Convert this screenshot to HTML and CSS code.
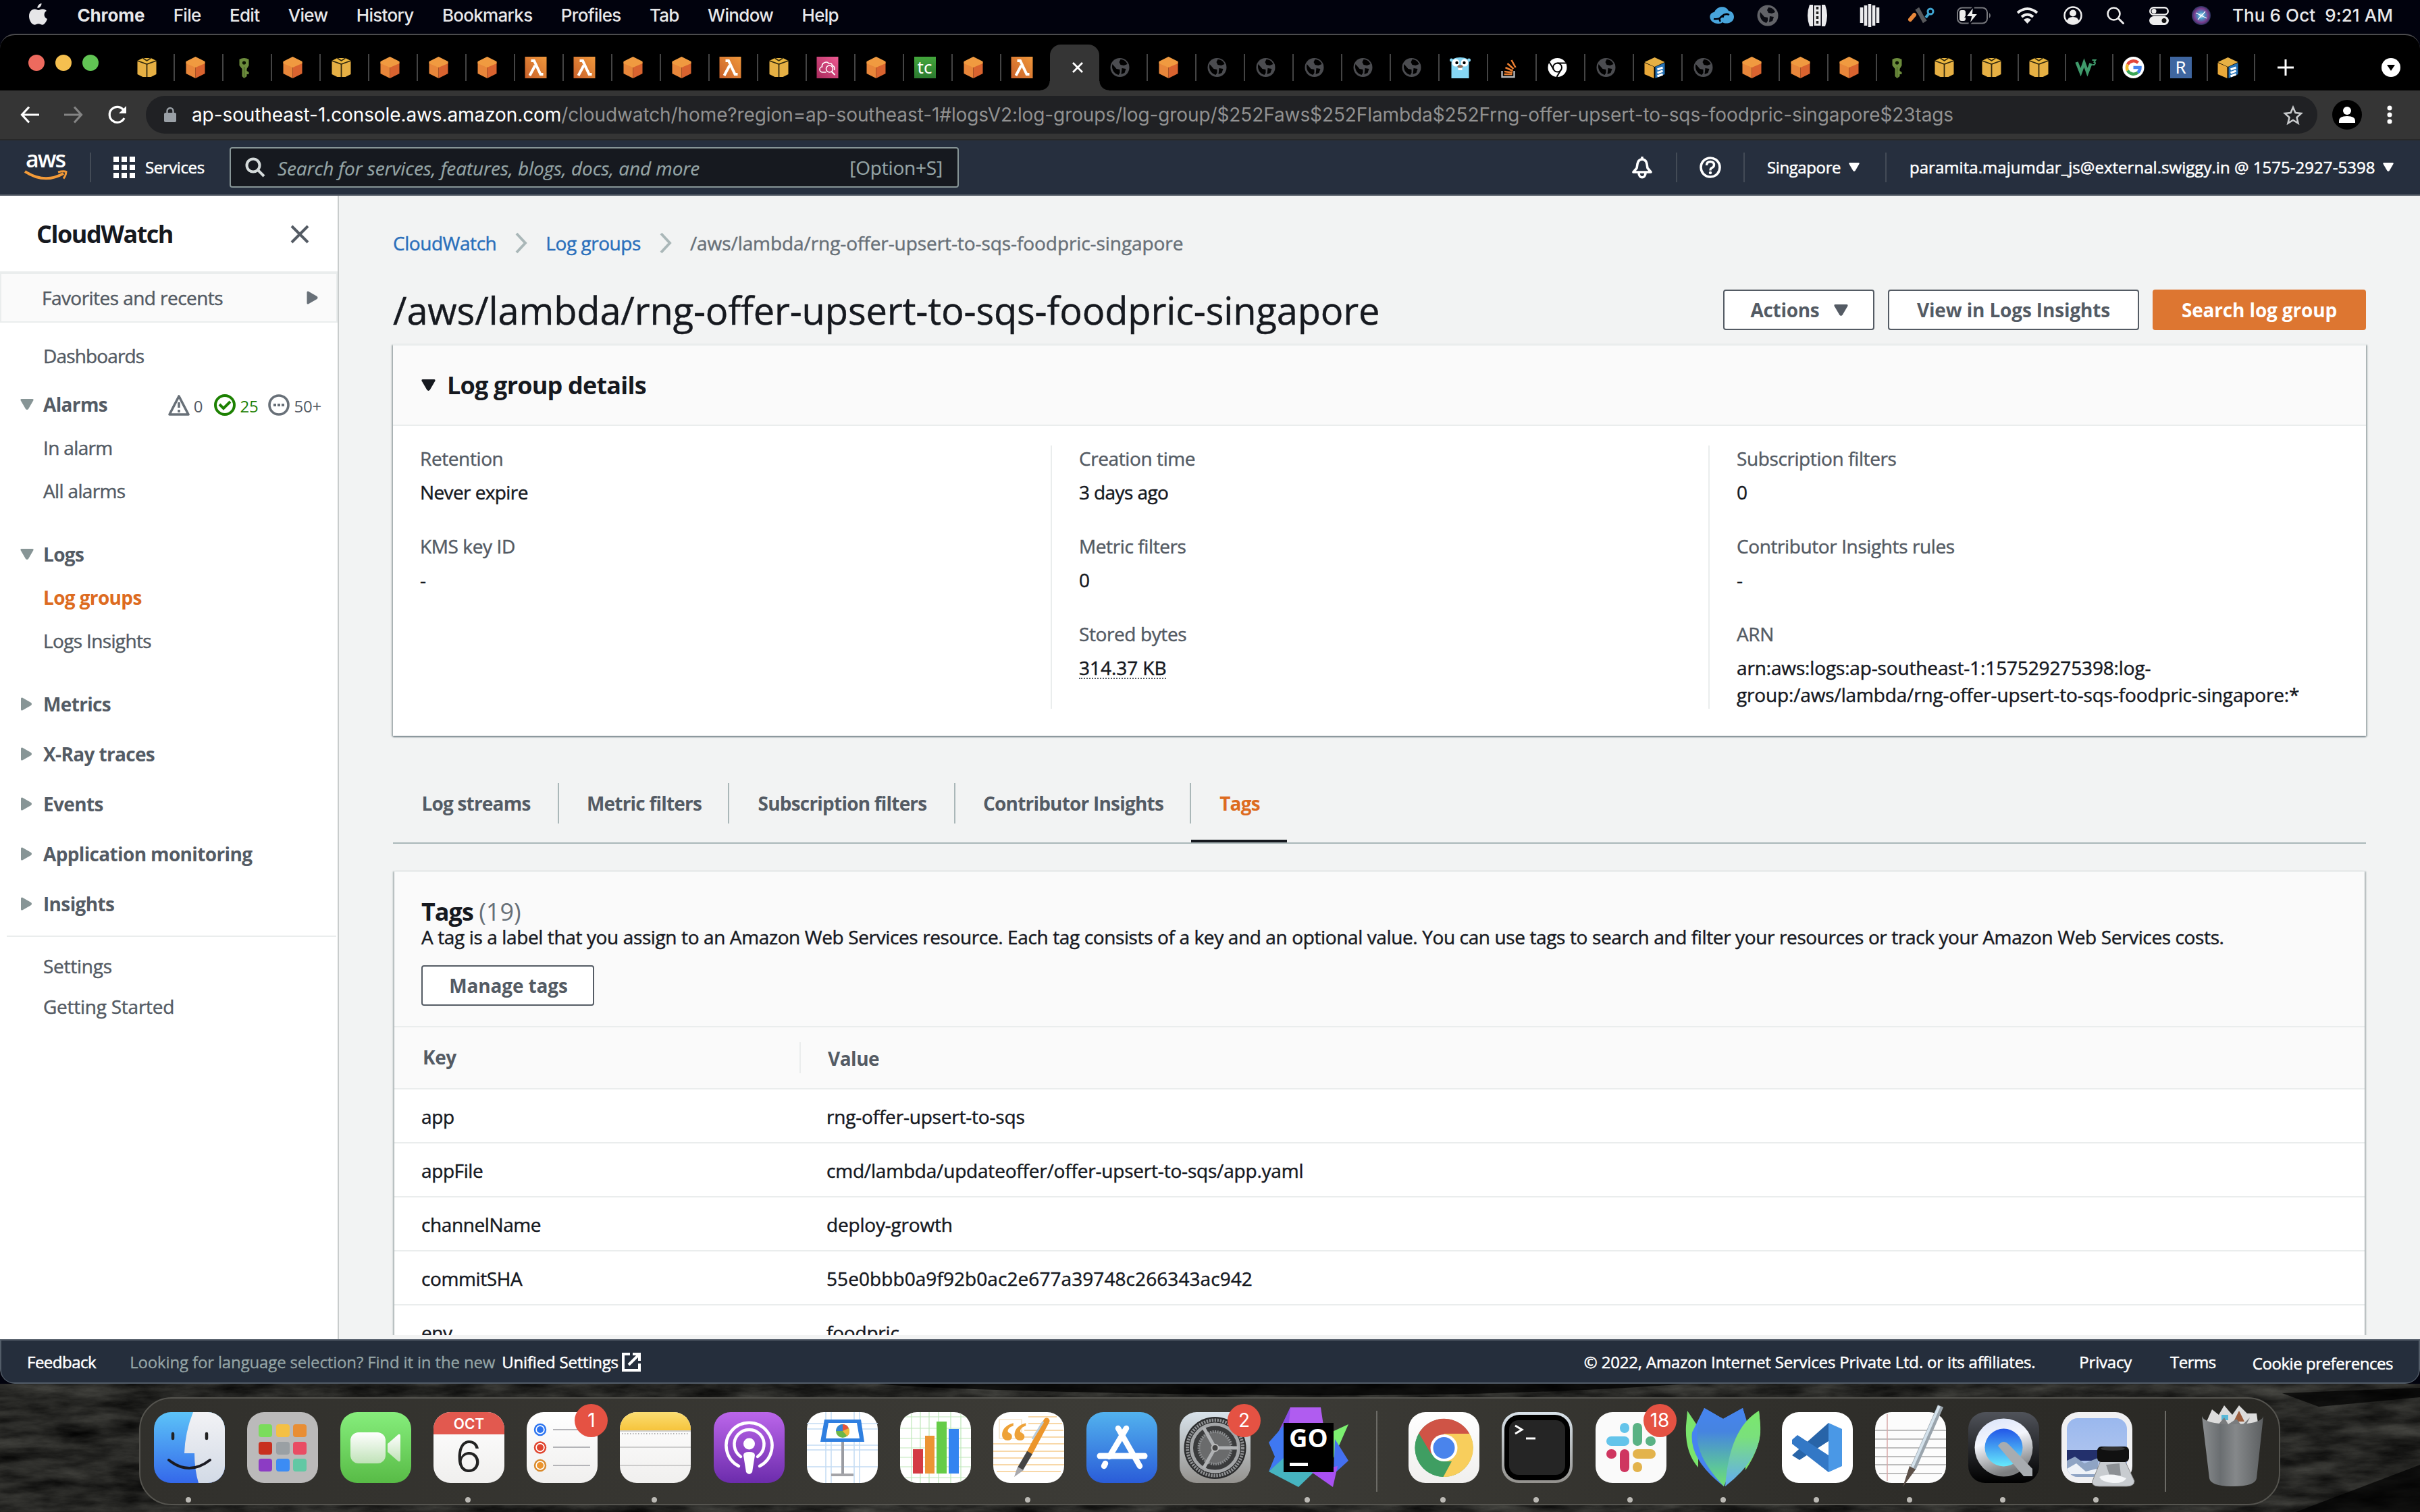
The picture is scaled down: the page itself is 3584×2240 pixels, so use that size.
FILE: index.html
```html
<!DOCTYPE html>
<html lang="en">
<head>
<meta charset="utf-8">
<title>CloudWatch Management Console</title>
<link rel="stylesheet" href="styles.css">
</head>
<body>
<svg class="defs" aria-hidden="true">
  <defs>
    <linearGradient id="gLambda" x1="0" y1="1" x2="1" y2="0"><stop offset="0" stop-color="#c8602a"/><stop offset="1" stop-color="#f0983c"/></linearGradient>
    <linearGradient id="gPink" x1="0" y1="1" x2="1" y2="0"><stop offset="0" stop-color="#a82a5c"/><stop offset="1" stop-color="#ee5a92"/></linearGradient>
    <linearGradient id="gBlue" x1="0" y1="0" x2="0" y2="1"><stop offset="0" stop-color="#5cc3f8"/><stop offset="1" stop-color="#3468ea"/></linearGradient>
    <linearGradient id="gStore" x1="0" y1="0" x2="0" y2="1"><stop offset="0" stop-color="#52b2ee"/><stop offset="1" stop-color="#2a5cd8"/></linearGradient>
    <linearGradient id="gFace" x1="0" y1="0" x2="0" y2="1"><stop offset="0" stop-color="#f2f2f5"/><stop offset="1" stop-color="#d2dae6"/></linearGradient>
    <linearGradient id="gGreen" x1="0" y1="0" x2="0" y2="1"><stop offset="0" stop-color="#86ee7c"/><stop offset="1" stop-color="#58bb46"/></linearGradient>
    <linearGradient id="gCam" x1="0" y1="0" x2="0" y2="1"><stop offset="0" stop-color="#fff"/><stop offset="1" stop-color="#c0e2b8"/></linearGradient>
    <linearGradient id="gPaper" x1="0" y1="0" x2="0" y2="1"><stop offset="0" stop-color="#fff"/><stop offset="1" stop-color="#f0efee"/></linearGradient>
    <linearGradient id="gNote" x1="0" y1="0" x2="0" y2="1"><stop offset="0" stop-color="#fbdd72"/><stop offset="1" stop-color="#f6c43c"/></linearGradient>
    <linearGradient id="gPod" x1="0" y1="0" x2="0" y2="1"><stop offset="0" stop-color="#bb66ea"/><stop offset="1" stop-color="#6c2cac"/></linearGradient>
    <linearGradient id="gGray" x1="0" y1="0" x2="0" y2="1"><stop offset="0" stop-color="#d8e2ea"/><stop offset="1" stop-color="#94928e"/></linearGradient>
    <linearGradient id="gLeaf" x1="0" y1="0" x2="0" y2="1"><stop offset="0" stop-color="#4684f0"/><stop offset=".3" stop-color="#4684e0"/><stop offset=".75" stop-color="#5cc49c"/><stop offset="1" stop-color="#72e070"/></linearGradient>
    <linearGradient id="gLeaf2" x1="0" y1="0" x2="0" y2="1"><stop offset="0" stop-color="#7ae86c"/><stop offset=".35" stop-color="#7ae07c"/><stop offset="1" stop-color="#62aaf4"/></linearGradient>
    <linearGradient id="gDark" x1="0" y1="0" x2="0" y2="1"><stop offset="0" stop-color="#50535a"/><stop offset="1" stop-color="#000"/></linearGradient>
    <linearGradient id="gSteel" x1="0" y1="0" x2=".3" y2="1"><stop offset="0" stop-color="#d8e2fa"/><stop offset=".45" stop-color="#f4f6fc"/><stop offset="1" stop-color="#7c7e80"/></linearGradient>
    <linearGradient id="gQt" x1="0" y1="0" x2="0" y2="1"><stop offset="0" stop-color="#2256e8"/><stop offset="1" stop-color="#66eafc"/></linearGradient>
    <linearGradient id="gTrash" x1="0" y1="0" x2="1" y2="0"><stop offset="0" stop-color="#8a8d8f"/><stop offset=".3" stop-color="#6a6e71"/><stop offset=".55" stop-color="#85888a"/><stop offset="1" stop-color="#5c5f61"/></linearGradient>
    <linearGradient id="gSky" x1="0" y1="0" x2="0" y2="1"><stop offset="0" stop-color="#9ab8ee"/><stop offset="1" stop-color="#b8caee"/></linearGradient>
    <radialGradient id="gSiri"><stop offset="0" stop-color="#d8f0ff"/><stop offset=".35" stop-color="#4a98c8"/><stop offset=".75" stop-color="#7a3a8c"/><stop offset="1" stop-color="#2a3560"/></radialGradient>
    <clipPath id="tile"><rect width="105" height="105" rx="25"/></clipPath>
    <clipPath id="shot"><rect x="8" y="9" width="89" height="87" rx="16"/></clipPath>
    <filter id="rock" x="0" y="0" width="100%" height="100%" color-interpolation-filters="sRGB">
      <feTurbulence type="fractalNoise" baseFrequency=".012 .05" numOctaves="6" seed="8"/>
      <feColorMatrix values=".32 0 0 0 -.01  .32 0 0 0 -.01  .3 0 0 0 -.01  0 0 0 0 1"/>
    </filter>
  </defs>
  <symbol id="cube" viewBox="0 0 32 32"><path fill="#e8863a" d="M2 8 16 14v18L2 25z"/><path fill="#d9632f" d="M30 8 16 14v18l14-7z"/><path fill="#f09a40" d="M16 0 30 7v3l-14 6L2 10V7z"/></symbol>
  <symbol id="box" viewBox="0 0 32 32"><path fill="#e6b044" d="M2 7h28v19l-8 4H10l-8-4z"/><path fill="#edb83f" d="M10 2h12l8 4-14 5L2 6z"/><path fill="none" stroke="#32290f" stroke-width="1.800" d="m2 6 14 5 14-5M10 2l6 4 6-4M16 11v19"/></symbol>
  <symbol id="key" viewBox="0 0 32 32"><path fill="#6c8c3c" d="M9 4q7-4 14 0v9l-3 5v3l3 2v3h-3v3l-4 3-3-3V18l-4-5z"/><circle cx="16" cy="9" r="2.600" fill="#0c1400"/><path stroke="#3e5620" d="M16 15v16"/></symbol>
  <symbol id="lambda" viewBox="0 0 32 32"><path fill="url(#gLambda)" d="M0 0h32v32H0z"/><path fill="none" stroke="#fff" stroke-width="4" d="M9 6h4.500L23 26h4M15 13 7 28"/></symbol>
  <symbol id="insight" viewBox="0 0 32 32"><path fill="url(#gPink)" d="M0 0h32v32H0z"/><path fill="none" stroke="#fff" stroke-width="1.600" d="M14 23H9a4 4 0 0 1-1-8c-1-6 7-9 10-5 3-1 5 1 5 3 4 1 4 5 3 7"/><circle cx="19" cy="18" r="5" fill="none" stroke="#fff" stroke-width="1.600"/><path stroke="#fff" stroke-width="2" d="m22 22 5 5"/></symbol>
  <symbol id="globe" viewBox="0 0 32 32"><circle cx="16" cy="16" r="14" fill="#4b4c50"/><path d="M17 4c6 0 9 4 10 7l-5 2-5-1-2-4zM5 11l6 7 5 1v5l-2 3C7 25 3 18 5 11zM19 17l6 1-2 6-5 2z"/></symbol>
  <symbol id="s3" viewBox="0 0 32 32"><path fill="#e6b044" d="M1 8 16 1l15 7-15 7z"/><path fill="#e9a93a" d="m1 9 14 6v17L1 26z"/><path fill="#2673b8" d="m17 15 14-6v17l-14 6z"/><path stroke="#fff" stroke-width="3" d="m20 19 8-3m-8 8 8-3m-8 8 8-3"/></symbol>
  <symbol id="alarmTri" viewBox="0 0 32 32"><path fill="none" stroke="#687078" stroke-width="3.600" stroke-linejoin="round" d="M16 3 30 30H2z"/><path stroke="#687078" stroke-width="3.600" d="M16 12v8m0 3v4"/></symbol>
  <symbol id="ok" viewBox="0 0 32 32"><circle cx="16" cy="16" r="14" fill="none" stroke="#1d8102" stroke-width="4"/><path fill="none" stroke="#1d8102" stroke-width="4" d="m8 15 6 6 10-10"/></symbol>
  <symbol id="pending" viewBox="0 0 32 32"><circle cx="16" cy="16" r="14" fill="none" stroke="#687078" stroke-width="3.600"/><path stroke="#687078" stroke-width="4" stroke-dasharray="4 2" d="M8 16h17"/></symbol>
  <symbol id="down" viewBox="0 0 20 16"><path fill="currentColor" d="M2 0h16q2 0 1.500 2L12 15q-2 2-4 0L.500 2Q0 0 2 0z"/></symbol>
  <symbol id="right" viewBox="0 0 16 20"><path fill="currentColor" d="M0 2Q0 0 2 .500L15 8q2 2 0 4L2 19.500Q0 20 0 18z"/></symbol>
  <symbol id="chev" viewBox="0 0 18 32"><path fill="none" stroke="#aab7b8" stroke-width="4" d="m2 2 13 14L2 30"/></symbol>
</svg>

<header class="menubar">
  <nav class="menus">
    <svg class="apple" viewBox="0 0 27 32"><path fill="#e6e6e8" d="M18.500 0c.3 3.500-2.700 7-6 7C12 3.600 15.200.5 18.500 0zM26 11c-5 3-4.300 10 1 12-1 3.500-4 8.500-7 8.700-2.500 0-3.300-1.400-6-1.400s-3.700 1.400-6 1.400C4 31.500 0 25 0 19 0 12 4.300 8.500 8.300 8.500c2.400 0 4.200 1.600 5.700 1.600s3.500-1.700 6.500-1.600c2.200.1 4.200 1 5.500 2.500z"/></svg>
    <b>Chrome</b><span>File</span><span>Edit</span><span>View</span><span>History</span><span>Bookmarks</span><span>Profiles</span><span>Tab</span><span>Window</span><span>Help</span>
  </nav>
  <div class="status">
    <svg width="37" height="26" viewBox="0 0 37 26"><path fill="#48a5dc" d="M12 25C-2 24-3 9 7 8 10-1 24-3 28 6c9 1 11 13 3 17-4 2-9 2-12 0-2 2-5 2-7 2z"/><path fill="none" stroke="#01020d" stroke-width="2.500" d="M6 18c5 1 9 0 12-4 3-3 7-4 11-2M16 22c-3-4 0-9 5-7"/></svg>
    <svg width="32" height="32" viewBox="0 0 32 32"><circle cx="16" cy="16" r="15.500" fill="#626368"/><path fill="#0a0b12" d="M17 4c6 0 9 4 10 7l-5 2-5-1-2-4zM5 11l6 7 5 1v5l-2 3C7 25 3 18 5 11zM19 17l6 1-2 6-5 2z"/></svg>
    <svg width="31" height="32" viewBox="0 0 31 32"><path fill="#ececee" d="M4 0h5v32H4q-6-16 0-32zM22 0h5q6 16 0 32h-5zM10.500 1h10v30h-10z"/><path stroke="#222" stroke-width="3.500" stroke-dasharray="4 3" d="M15.500 3v27"/></svg>
    <svg width="28" height="34" viewBox="0 0 28 34"><path stroke="#ececee" stroke-width="4.600" d="M2 5v23M8 2v30M14 0v34M20 2v30M26 5v23"/></svg>
    <svg width="40" height="22" viewBox="0 0 40 22"><path fill="none" stroke="#58595c" stroke-width="6" d="m13 5 3-2 8 15 3-2"/><path stroke="#e8873a" stroke-width="6" stroke-linecap="round" d="m4 17 6-7"/><circle cx="34" cy="5" r="4" fill="none" stroke="#3fa4d0" stroke-width="3"/><path stroke="#3fa4d0" stroke-width="4" d="m27 14 4-5"/></svg>
    <svg width="52" height="26" viewBox="0 0 52 26"><rect x="1" y="1.500" width="44" height="23" rx="7" fill="none" stroke="#77787d" stroke-width="2"/><rect x="4" y="5" width="9" height="16" rx="3" fill="#eee"/><path fill="#eee" stroke="#01020d" stroke-width="2" d="M25-1 13 15h8l-3 12 14-17h-8z"/><path fill="#77787d" d="M48 9q4 4 0 8z"/></svg>
    <svg width="33" height="24" viewBox="0 0 33 24"><path fill="none" stroke="#eee" stroke-width="4" d="M2 8q14.500-12 29 0M8 14q8.500-7 17 0"/><path fill="#eee" d="M11 18q5.500-4 11 0l-5.500 6z"/></svg>
    <svg width="28" height="28" viewBox="0 0 28 28"><circle cx="14" cy="14" r="12.500" fill="none" stroke="#eee" stroke-width="2.500"/><circle cx="14" cy="10.500" r="5" fill="#eee"/><path fill="#eee" d="M5 22q2-6 9-6t9 6q-9 8-18 0z"/></svg>
    <svg width="26" height="26" viewBox="0 0 26 26"><circle cx="10.500" cy="10.500" r="9" fill="none" stroke="#eee" stroke-width="2.600"/><path stroke="#eee" stroke-width="3" stroke-linecap="round" d="m17 17 7.500 7.500"/></svg>
    <svg width="29" height="27" viewBox="0 0 29 27"><rect x="1.200" y="1.200" width="26.600" height="10.600" rx="5.300" fill="none" stroke="#eee" stroke-width="2.400"/><circle cx="7" cy="6.500" r="3.500" fill="#eee"/><rect y="14" width="29" height="13" rx="6.500" fill="#eee"/><circle cx="22" cy="20.500" r="3.500" fill="#111"/></svg>
    <svg width="28" height="28" viewBox="0 0 28 28"><circle cx="14" cy="14" r="14" fill="url(#gSiri)"/><path stroke="#fff" stroke-width="1.200" d="m6 10 16 8M20 8 9 20"/></svg>
    <span class="clock">Thu 6 Oct&nbsp; 9:21 AM</span>
  </div>
</header>

<div class="window">
  <div class="tabstrip">
    <div class="lights"><i class="red"></i><i class="amber"></i><i class="green"></i></div>
    <div class="tabs">
      <svg><use href="#box"/></svg><svg><use href="#cube"/></svg><svg><use href="#key"/></svg><svg><use href="#cube"/></svg><svg><use href="#box"/></svg><svg><use href="#cube"/></svg><svg><use href="#cube"/></svg><svg><use href="#cube"/></svg><svg><use href="#lambda"/></svg><svg><use href="#lambda"/></svg><svg><use href="#cube"/></svg><svg><use href="#cube"/></svg><svg><use href="#lambda"/></svg><svg><use href="#box"/></svg><svg><use href="#insight"/></svg><svg><use href="#cube"/></svg><b class="tc">tc</b><svg><use href="#cube"/></svg><svg class="last"><use href="#lambda"/></svg>
    </div>
    <div class="active-tab"><svg width="18" height="18" viewBox="0 0 18 18"><path stroke="#fff" stroke-width="2.800" d="m2 2 14 14M16 2 2 16"/></svg></div>
    <div class="tabs">
      <svg><use href="#globe"/></svg><svg><use href="#cube"/></svg><svg><use href="#globe"/></svg><svg><use href="#globe"/></svg><svg><use href="#globe"/></svg><svg><use href="#globe"/></svg><svg><use href="#globe"/></svg>
      <svg viewBox="0 0 32 32"><path fill="#86d7f5" d="M3 9Q3 1 16 1t13 8v23H3z"/><circle cx="3" cy="5" r="2.500" fill="#86d7f5"/><circle cx="29" cy="5" r="2.500" fill="#86d7f5"/><circle cx="9.500" cy="9" r="5.500" fill="#fff"/><circle cx="22.500" cy="9" r="5.500" fill="#fff"/><circle cx="11" cy="9" r="2.200"/><circle cx="22" cy="9" r="2.200"/><path fill="#fff" d="M13 14h6v6h-6z"/><ellipse cx="16" cy="14.500" rx="4" ry="2.200" fill="#8a6a58"/></svg>
      <svg viewBox="0 0 32 32"><path fill="none" stroke="#b8babd" stroke-width="2.400" d="M6 21v9h18v-9"/><path stroke="#e87d30" stroke-width="2.600" d="M9 26h12M9.500 22l12 1.500M11 16l11 5M14 10l9 8M20 5l6 11"/></svg>
      <svg viewBox="0 0 32 32"><circle cx="16" cy="16" r="14" fill="#fff"/><circle cx="16" cy="16" r="6.500" fill="none" stroke="#000" stroke-width="2"/><path stroke="#000" stroke-width="2" d="M16 9.500h13M10.500 19 4 8M21.500 19 15 30"/></svg>
      <svg><use href="#globe"/></svg><svg><use href="#s3"/></svg><svg><use href="#globe"/></svg><svg><use href="#cube"/></svg><svg><use href="#cube"/></svg><svg><use href="#cube"/></svg>
    </div>
    <div class="tabs narrow">
      <svg><use href="#key"/></svg><svg><use href="#box"/></svg><svg><use href="#box"/></svg><svg><use href="#box"/></svg>
      <svg viewBox="0 0 32 32"><path fill="none" stroke="#3f9a6b" stroke-width="4.500" d="m2 8 6 15 5-14 5 14 5-13"/><path fill="none" stroke="#3f9a6b" stroke-width="2" d="M25 5h5l-2 3q3 1 0 4h-3"/></svg>
      <svg viewBox="0 0 32 32"><circle cx="16" cy="16" r="16" fill="#fff"/><g fill="none" stroke-width="4.500"><path stroke="#e2463a" d="M7.500 11.500a10 10 0 0 1 15.500-2.500"/><path stroke="#f2b92c" d="M7.500 20.500a10 10 0 0 1 0-9"/><path stroke="#3ba556" d="M22.500 23.500A10 10 0 0 1 7.500 20.500"/><path stroke="#4484ee" d="M16 16h10q0 5-3.500 7.500"/></g></svg>
      <b class="r">R</b><svg><use href="#s3"/></svg>
    </div>
    <svg class="plus" width="24" height="24" viewBox="0 0 24 24"><path stroke="#fff" stroke-width="3" d="M12 0v24M0 12h24"/></svg>
    <svg class="more-tabs" width="28" height="28" viewBox="0 0 28 28"><circle cx="14" cy="14" r="14" fill="#fff"/><path d="M8 10h12l-6 9z"/></svg>
  </div>

  <div class="toolbar">
    <svg width="28" height="26" viewBox="0 0 28 26"><path fill="none" stroke="#fff" stroke-width="3.200" d="M28 13H3M13 1.500 2.500 13 13 24.500"/></svg>
    <svg width="28" height="26" viewBox="0 0 28 26"><path fill="none" stroke="#848484" stroke-width="3.200" d="M0 13h25M15 1.500 25.500 13 15 24.500"/></svg>
    <svg width="28" height="28" viewBox="0 0 28 28"><path fill="none" stroke="#fff" stroke-width="3.200" d="M24 19A11.500 11.500 0 1 1 23 7"/><path fill="#fff" d="M27 1v11H16z"/></svg>
    <div class="omnibox">
      <svg width="18" height="22" viewBox="0 0 18 22"><rect y="8" width="18" height="14" rx="2" fill="#9aa0a6"/><path fill="none" stroke="#9aa0a6" stroke-width="2.400" d="M4.500 9V5.500a4.500 4.500 0 0 1 9 0V9"/></svg>
      <span class="url"><em>ap-southeast-1.console.aws.amazon.com</em>/cloudwatch/home?region=ap-southeast-1#logsV2:log-groups/log-group/$252Faws$252Flambda$252Frng-offer-upsert-to-sqs-foodpric-singapore$23tags</span>
      <svg class="star" width="30" height="28" viewBox="0 0 30 28"><path fill="none" stroke="#c8cacc" stroke-width="2.600" d="m15 3 3.500 8 8.500 1-6.500 6 2 8.500L15 22l-7.500 4.500 2-8.500L3 12l8.500-1z"/></svg>
    </div>
    <svg class="avatar" width="44" height="44" viewBox="0 0 44 44"><circle cx="22" cy="22" r="22"/><circle cx="22" cy="16" r="6" fill="#fff"/><path fill="#fff" d="M10 34v-3q0-7 12-7t12 7v3z"/></svg>
    <svg width="8" height="28" viewBox="0 0 8 28"><g fill="#fff"><circle cx="4" cy="4" r="3.500"/><circle cx="4" cy="14" r="3.500"/><circle cx="4" cy="24" r="3.500"/></g></svg>
  </div>

  <div class="awsbar">
    <svg class="aws-logo" width="64" height="44" viewBox="0 0 64 44"><text x="2" y="21" textLength="59" class="aws-word">aws</text><path fill="none" stroke="#f29a38" stroke-width="4" d="M1 27q29 19 57 3"/><path fill="none" stroke="#f29a38" stroke-width="3" d="M50 28q8-2 12-.500-.500 6-4 10"/></svg>
    <a class="services"><svg width="32" height="32" viewBox="0 0 32 32"><path stroke="#fff" stroke-width="8" stroke-dasharray="8 4" d="M0 4h32M0 16h32M0 28h32"/></svg>Services</a>
    <div class="search">
      <svg width="30" height="30" viewBox="0 0 30 30"><circle cx="12" cy="12" r="9.500" fill="none" stroke="#d5dbdb" stroke-width="4"/><path stroke="#d5dbdb" stroke-width="4" d="m19 19 9 9"/></svg>
      <i>Search for services, features, blogs, docs, and more</i><span>[Option+S]</span>
    </div>
    <div class="account">
      <a class="c-bell"><svg width="32" height="34" viewBox="0 0 32 34"><path fill="none" stroke="#fff" stroke-width="3.600" stroke-linejoin="round" d="M16 1v4M16 5c-8 0-7 10-8 13l-5 6h26l-5-6c-1-3 0-13-8-13zM11 25c0 9 10 9 10 0"/></svg></a>
      <a class="c-help"><svg width="32" height="32" viewBox="0 0 32 32"><circle cx="16" cy="16" r="14" fill="none" stroke="#fff" stroke-width="3.600"/><path fill="none" stroke="#fff" stroke-width="3.400" d="M10.500 13q0-5.500 5.500-5.500t5.500 5q0 3-4 4.500-1.500.8-1.500 3.500"/><circle cx="16" cy="24" r="2.200" fill="#fff"/></svg></a>
      <a class="c-region">Singapore<svg><use href="#down"/></svg></a>
      <a class="c-user">paramita.majumdar_js@external.swiggy.in @ 1575-2927-5398<svg><use href="#down"/></svg></a>
    </div>
  </div>

  <div class="page">
    <aside class="sidebar">
      <div class="side-title"><h2>CloudWatch</h2><svg width="28" height="28" viewBox="0 0 28 28"><path stroke="#545b64" stroke-width="4" d="m2 2 24 24M26 2 2 26"/></svg></div>
      <div class="favorites">Favorites and recents<svg><use href="#right"/></svg></div>
      <nav>
        <a class="dash">Dashboards</a>
        <a class="group"><svg class="dn"><use href="#down"/></svg>Alarms
          <span class="counts"><svg><use href="#alarmTri"/></svg><span class="n0">0</span><svg><use href="#ok"/></svg><span class="n1">25</span><svg><use href="#pending"/></svg><span>50+</span></span></a>
        <a>In alarm</a><a>All alarms</a>
        <a class="group far"><svg class="dn"><use href="#down"/></svg>Logs</a>
        <a class="current">Log groups</a><a>Logs Insights</a>
        <a class="group far"><svg><use href="#right"/></svg>Metrics</a>
        <a class="group near"><svg><use href="#right"/></svg>X-Ray traces</a>
        <a class="group near"><svg><use href="#right"/></svg>Events</a>
        <a class="group near"><svg><use href="#right"/></svg>Application monitoring</a>
        <a class="group near"><svg><use href="#right"/></svg>Insights</a>
      </nav>
      <div class="side-foot"><a>Settings</a><a>Getting Started</a></div>
    </aside>

    <main>
      <div class="crumbs"><a>CloudWatch</a><svg><use href="#chev"/></svg><a>Log groups</a><svg><use href="#chev"/></svg><span>/aws/lambda/rng-offer-upsert-to-sqs-foodpric-singapore</span></div>
      <div class="headline">
        <h1>/aws/lambda/rng-offer-upsert-to-sqs-foodpric-singapore</h1>
        <button class="b-actions">Actions<svg><use href="#down"/></svg></button><button class="b-view">View in Logs Insights</button><button class="primary">Search log group</button>
      </div>
      <section class="card">
        <h2><svg><use href="#down"/></svg>Log group details</h2>
        <div class="columns">
          <dl><dt>Retention</dt><dd>Never expire</dd><dt>KMS key ID</dt><dd>-</dd></dl>
          <dl><dt>Creation time</dt><dd>3 days ago</dd><dt>Metric filters</dt><dd>0</dd><dt>Stored bytes</dt><dd><span class="dotted">314.37 KB</span></dd></dl>
          <dl><dt>Subscription filters</dt><dd>0</dd><dt>Contributor Insights rules</dt><dd>-</dd><dt>ARN</dt><dd class="arn">arn:aws:logs:ap-southeast-1:157529275398:log-<br>group:/aws/lambda/rng-offer-upsert-to-sqs-foodpric-singapore:*</dd></dl>
        </div>
      </section>
      <div class="tabbar"><a>Log streams</a><a>Metric filters</a><a>Subscription filters</a><a>Contributor Insights</a><a class="on">Tags</a></div>
      <section class="card tags">
        <div class="tags-head">
          <h2>Tags <span>(19)</span></h2>
          <p>A tag is a label that you assign to an Amazon Web Services resource. Each tag consists of a key and an optional value. You can use tags to search and filter your resources or track your Amazon Web Services costs.</p>
          <button>Manage tags</button>
        </div>
        <div class="row head"><span>Key</span><span>Value</span></div>
        <div class="row"><span>app</span><span>rng-offer-upsert-to-sqs</span></div>
        <div class="row"><span>appFile</span><span>cmd/lambda/updateoffer/offer-upsert-to-sqs/app.yaml</span></div>
        <div class="row"><span>channelName</span><span>deploy-growth</span></div>
        <div class="row"><span>commitSHA</span><span class="sha">55e0bbb0a9f92b0ac2e677a39748c266343ac942</span></div>
        <div class="row"><span>env</span><span>foodpric</span></div>
      </section>
    </main>
  </div>

  <footer>
    <a class="fb">Feedback</a><span class="lang">Looking for language selection? Find it in the new</span><a>Unified Settings</a>
    <svg width="28" height="28" viewBox="0 0 28 28"><path fill="none" stroke="#fff" stroke-width="4" d="M12 2H2v24h24V16M16 2h10v10M26 2 10 18"/></svg>
    <span class="copy">© 2022, Amazon Internet Services Private Ltd. or its affiliates.</span><a class="priv">Privacy</a><a class="terms">Terms</a><a class="cookie">Cookie preferences</a>
  </footer>
</div>

<div class="desktop">
  <svg class="wallpaper" width="3584" height="190"><rect width="3584" height="190" filter="url(#rock)"/><path d="M1300 0h1200q-300 22-700 16T1300 0zM3380 14 3584 6v14l-150 14zM3400 190l184-70v70z" opacity=".7"/></svg>
  <div class="dock">
    <div class="app run"><svg viewBox="0 0 105 105"><g clip-path="url(#tile)"><path fill="url(#gBlue)" d="M0 0h105v105H0z"/><path fill="url(#gFace)" d="M58 0Q46 30 45 61h15q0 24 6 44h39V0z"/></g><path stroke="#222" stroke-width="4.500" stroke-linecap="round" d="M28 32v7M78 32v7"/><path fill="none" stroke="#1a1a22" stroke-width="4" stroke-linecap="round" d="M22 71q30 24 61 0"/></svg></div>
    <div class="app"><svg viewBox="0 0 105 105"><rect width="105" height="105" rx="25" fill="#bbbaba"/><g><rect x="17" y="18" width="20" height="19" rx="4" fill="#7bdc5c"/><rect x="43" y="18" width="20" height="19" rx="4" fill="#f4c044"/><rect x="68" y="18" width="20" height="19" rx="4" fill="#e98e34"/><rect x="17" y="44" width="20" height="19" rx="4" fill="#c8301f"/><rect x="43" y="44" width="20" height="19" rx="4" fill="#9aa0a4"/><rect x="68" y="44" width="20" height="19" rx="4" fill="#e94c64"/><rect x="17" y="69" width="20" height="19" rx="4" fill="#8c3cc4"/><rect x="43" y="69" width="20" height="19" rx="4" fill="#3c8cf4"/><rect x="68" y="69" width="20" height="19" rx="4" fill="#62c8a4"/></g></svg></div>
    <div class="app"><svg viewBox="0 0 105 105"><rect width="105" height="105" rx="25" fill="url(#gGreen)"/><rect x="15" y="30" width="52" height="46" rx="12" fill="url(#gCam)"/><path fill="url(#gCam)" d="M70 47 86 33q3-1 3 2v36q0 3-3 2L70 59z"/></svg></div>
    <div class="app run"><svg viewBox="0 0 105 105"><g clip-path="url(#tile)"><path fill="url(#gPaper)" d="M0 0h105v105H0z"/><path fill="#e2594f" d="M0 0h105v33H0z"/></g><text x="52.500" y="25" class="oct">OCT</text><text x="52" y="89" class="six">6</text></svg></div>
    <div class="app"><svg viewBox="0 0 105 105"><rect width="105" height="105" rx="25" fill="url(#gPaper)"/><path stroke="#b4b4b8" stroke-width="2" d="M39 26h55M39 52h55M39 79h55"/><g fill="#fff" stroke-width="2.500"><circle cx="20" cy="26" r="8" stroke="#2c74f0"/><circle cx="20" cy="52.500" r="8" stroke="#e0452f"/><circle cx="20" cy="79" r="8" stroke="#d98a2c"/></g><circle cx="20" cy="26" r="5" fill="#2c74f0"/><circle cx="20" cy="52.500" r="5" fill="#e0452f"/><circle cx="20" cy="79" r="5" fill="#ec942c"/></svg><span class="badge">1</span></div>
    <div class="app run"><svg viewBox="0 0 105 105"><g clip-path="url(#tile)"><path fill="url(#gPaper)" d="M0 0h105v105H0z"/><path fill="url(#gNote)" d="M0 0h105v27H0z"/><path stroke="#c0c0c0" stroke-width="1.500" d="M0 28h105M0 52h105M0 79h105"/><path stroke="#999" stroke-width="1.500" stroke-dasharray="1.500 2.500" d="M3 32h100"/></g></svg></div>
    <div class="app"><svg viewBox="0 0 105 105"><rect width="105" height="105" rx="25" fill="url(#gPod)"/><g fill="none" stroke="#fff" stroke-width="4.500" stroke-linecap="round"><path d="M37 80a34 34 0 1 1 31 0M40 66a22 22 0 1 1 25 0"/></g><circle cx="52.500" cy="47" r="8.500" fill="#fff"/><path fill="#fff" d="M44 64q0-5 8.500-5t8.500 5l-4 25q-4.500 6-9 0z"/></svg></div>
    <div class="app"><svg viewBox="0 0 105 105"><rect width="105" height="105" rx="25" fill="#fff"/><path fill="none" stroke="#c4dcf4" stroke-width="1.500" d="M0 17h105M0 25h105M0 49h105M0 56h105M0 81h105M28 0v105M36 0v105M70 0v105M78 0v105"/><path stroke="#9a9ca2" stroke-width="4" d="M53 44v50"/><path fill="#a4a4a8" d="M36 91h33v4H36z"/><path fill="#2f7fe0" d="M26 11h54l5 33H20z"/><path fill="#fff" d="M32 16h42l4 23H28z"/><circle cx="53" cy="28" r="10" fill="#6cb648"/><path fill="#3484d8" d="M53 28H43a10 10 0 0 1 10-10z"/><path fill="#e8543c" d="M53 28V18a10 10 0 0 1 9 6z"/><path fill="#f0b83c" d="m53 28 9-4a10 10 0 0 1-2 12z"/></svg></div>
    <div class="app"><svg viewBox="0 0 105 105"><rect width="105" height="105" rx="25" fill="#fff"/><path fill="none" stroke="#bfe8ba" stroke-width="1.200" d="M0 24h105M0 39h105M0 53h105M0 67h105M0 81h105M8 7h89M8 97h89M17 3v99M30 0v105M43 0v105M57 0v105M75 0v105M90 3v99"/><path fill="#d43c44" d="M19 55h15v36H19z"/><path fill="#ec9434" d="M37 35h14v56H37z"/><path fill="#66cc48" d="M54 14h15v77H54z"/><path fill="#3484f0" d="M72 25h15v66H72z"/></svg></div>
    <div class="app run"><svg viewBox="0 0 105 105"><rect width="105" height="105" rx="25" fill="#fff"/><path stroke="#f8d8a8" stroke-width="2" d="M52 7h42M52 17h50M46 27h58M46 37h59M0 47h105M0 58h105M0 68h105M0 78h105M5 88h95"/><path fill="none" stroke="#f4dcb8" stroke-width="1.200" d="M9 11h33v28H9z"/><text x="9" y="73" class="quote">“</text><path stroke="#ec962c" stroke-width="9" stroke-linecap="round" d="M79 13 54 60"/><path stroke="#444" stroke-width="9" d="M54 60 40 84"/><path fill="#a8a8ac" d="m36 81 9 5-14 10z"/><path stroke="#b8ccdc" stroke-width="3" d="M74 14 58 40"/></svg></div>
    <div class="app"><svg viewBox="0 0 105 105"><rect width="105" height="105" rx="25" fill="url(#gStore)"/><g stroke="#fff" stroke-width="8.500" stroke-linecap="round"><path d="M47 24 79 80M59 24 34 66M28 76l-2 4"/><path stroke-width="9" d="M20 65h66"/></g></svg></div>
    <div class="app"><svg viewBox="0 0 105 105"><rect width="105" height="105" rx="25" fill="url(#gGray)"/><circle cx="52.500" cy="53" r="46" fill="#2c2d2e"/><circle cx="52.500" cy="53" r="41" fill="none" stroke="#8e9092" stroke-width="5" stroke-dasharray="2.500 1.500"/><circle cx="52.500" cy="53" r="35" fill="#3a3b3c" stroke="#a4a6a8" stroke-width="5"/><circle cx="52.500" cy="53" r="24" fill="#6a6b6c" stroke="#8a8c8e" stroke-width="4" stroke-dasharray="2 1.500"/><path stroke="#b0b2b4" stroke-width="5" d="M52.500 53h34M52.500 53l-17-30M52.500 53l-17 30"/><circle cx="52.500" cy="53" r="5" fill="#444" stroke="#bbb" stroke-width="2"/></svg><span class="badge">2</span></div>
    <div class="app run"><svg viewBox="0 0 105 105"><path fill="#b05cf0" d="M26-7h45l6 40H8z"/><path fill="#8a4ce8" d="M26-7 8 30l-8 20 20 10z"/><path fill="#3f78f2" d="M-6 45 16 20v50L-6 88l9-22z"/><path fill="#46b4c0" d="m-6 88 22-20 48 18-26 25z"/><path fill="#7cf070" d="m86 30 26-12-22 50z"/><path fill="#4470f0" d="m92 40 20 32-22 20z"/><path fill="#a850f2" d="m56 88 40-8-7 31z"/><rect x="16" y="16" width="74" height="73"/><text x="24" y="52" class="go">GO</text><path fill="#fff" d="M25 75h27v5H25z"/></svg></div>
    <i class="sep"></i>
    <div class="app run"><svg viewBox="0 0 105 105"><rect width="105" height="105" rx="25" fill="url(#gPaper)"/><circle cx="52.500" cy="53" r="43" fill="#3f9e62"/><path fill="#f8ce5c" d="M52.500 32h37.800A43 43 0 0 1 51 96z"/><path fill="#cf5446" d="M52.500 32h37.800A43 43 0 0 0 15.300 31.500L33 62z"/><path fill="#3f9e62" d="M15.300 31.500 34 63l18 10 12 0L51.500 96A43 43 0 0 1 15.300 31.500z"/><circle cx="52.500" cy="53" r="20" fill="#fff"/><circle cx="52.500" cy="53" r="16" fill="#4a84ec"/></svg></div>
    <div class="app run"><svg viewBox="0 0 105 105"><rect width="105" height="105" rx="25" fill="url(#gGray)"/><rect x="4" y="4" width="97" height="97" rx="22"/><rect x="11" y="12" width="83" height="81" rx="14" fill="#252525"/><path fill="none" stroke="#fff" stroke-width="3" d="m20 20 10 6-10 6M36 39h14"/></svg></div>
    <div class="app run"><svg viewBox="0 0 105 105"><rect width="105" height="105" rx="25" fill="#fafafa"/><g stroke-width="14" stroke-linecap="round"><path stroke="#64c4ea" d="M23 43h20M43 23v1"/><path stroke="#5ab284" d="M62 23v20M81 43h1"/><path stroke="#cf3660" d="M43 62v20M24 62h-1"/><path stroke="#e3b34c" d="M62 62h20M62 81v1"/></g></svg><span class="badge">18</span></div>
    <div class="app run"><svg viewBox="0 0 105 105"><path fill="#7ae46c" d="m-2-2 16 24v60Q-6 60-4 20zM104-2 84 20v66q24-36 22-66z"/><path fill="#4684f0" d="m23-6 28 16L80-6l8 30-36 86Q0 70 5 30z"/><path fill="url(#gLeaf)" d="m23-6 28 16L80-6 88 20 52 110Q4 60 14 20z"/><path fill="url(#gLeaf2)" d="M104-2Q60 24 54 110 110 66 106 20z"/></svg></div>
    <div class="app run"><svg viewBox="0 0 105 105"><rect width="105" height="105" rx="25" fill="#fff"/><path fill="#2864a8" d="M69 16v27L26 71l-11-7z"/><path fill="#3378c6" d="m15 41 8-7 46 30v25L15 47z"/><path fill="#4a98e6" d="m69 16 20 9v55l-20 9z"/></svg></div>
    <div class="app run"><svg viewBox="0 0 105 105"><rect width="105" height="105" rx="25" fill="#fcfcfc"/><path stroke="#bdbdbd" stroke-width="2" d="M0 27h105M0 40h105M0 53h105M0 66h105M0 78h105M6 91h93"/><path stroke="#d8a8a8" stroke-width="1.500" d="M18 3v99"/><path stroke="#9aa4ac" stroke-width="9" d="M97-9 56 84"/><path stroke="#d4e2ec" stroke-width="4" d="M95-9 54 84"/><path fill="#5c5048" d="m51 80 9 5-19 26z"/></svg></div>
    <div class="app run"><svg viewBox="0 0 105 105"><rect width="105" height="105" rx="25" fill="url(#gDark)"/><circle cx="52.500" cy="52.500" r="43" fill="url(#gSteel)"/><circle cx="52.500" cy="52.500" r="28" fill="url(#gQt)"/><path fill="#a8acb0" d="M44 50q8-12 18 0l33 34v11H82z"/></svg></div>
    <div class="app run"><svg viewBox="0 0 105 105"><rect width="105" height="105" rx="25" fill="#f0f0f2"/><g clip-path="url(#shot)"><path fill="url(#gSky)" d="M8 9h89v87H8z"/><path fill="#23306c" d="M8 56h89v16H8z"/><path fill="#8fa4c4" d="m8 72 12-6 14 10 20-8v28H8z"/><path fill="#eef2f8" d="m8 84 14-8 14 12 16-4v8H8z"/></g><path fill="#c8ccd0" stroke="#888" d="M58 72h36l14 30q0 8-12 8H56q-12 0-10-8z"/><path fill="#8c9094" d="m66 78 20-2 2 18-16 2z"/><path fill="#f4f6f8" d="M56 96q18-8 40 2-4 8-20 7t-20-9z"/><rect x="53" y="51" width="47" height="23" rx="6" fill="#111"/><ellipse cx="76" cy="54" rx="18" ry="3" fill="#333"/></svg></div>
    <i class="sep"></i>
    <div class="app"><svg viewBox="0 0 105 105"><path fill="#dcdcdc" d="m14 14 8-18 10 8 8-14 12 14 10-14 12 12 14 0 2 14-20 12H26z"/><path fill="#9a5c3c" d="m54 14 8-16 8 16z"/><path fill="#58b8d8" d="M36 4h10v8H36z"/><path fill="#7a7c7e" d="m22 10 8 10 10-12 6 10 12-8 8 10 12-12-6 12H30z"/><path fill="url(#gTrash)" d="M7 6q4 12 46 12T98 6L88 98q-2 12-35 12T18 98z"/></svg></div>
  </div>
</div>
</body>
</html>
```
FILE: styles.css
```css
* { box-sizing: border-box; }
body { margin: 0; width: 3584px; height: 2240px; overflow: hidden; background: #01020d; font: 28px/40px "Open Sans", "Noto Sans", sans-serif; color: #16191f; letter-spacing: -.6px; display: flex; flex-direction: column; }
h1, h2, p, dl, dt, dd { margin: 0; }
svg { display: block; flex: none; overflow: visible; }
.defs { position: absolute; width: 0; height: 0; }

/* macOS menu bar */
.menubar { height: 50px; flex: none; display: flex; align-items: center; font: 500 26px/46px Inter, sans-serif; letter-spacing: -.7px; color: #e8e8ea; padding-bottom: 4px; }
.menus { display: flex; gap: 42.4px; align-items: center; padding-left: 43px; width: 2532px; }
.menus b { font-weight: 700; letter-spacing: -.1px; margin-left: 2px; }
.apple { width: 27px; height: 32px; margin-top: -4px; }
.status { display: grid; align-items: center; grid-template-columns: 70px 74px 79px 70px 73px 88px 70px 64px 63px 63px 60px auto; }
.clock { white-space: nowrap; letter-spacing: .1px; }

/* browser window */
.window { height: 2000px; flex: none; border-radius: 22px; overflow: hidden; border-top: 2px solid #4c4c4e; background: #000; display: flex; flex-direction: column; }
.tabstrip { height: 82px; flex: none; display: flex; align-items: center; padding-top: 14px; position: relative; }
.lights { width: 187px; display: flex; gap: 16px; padding: 0 0 14px 42px; }
.lights i { width: 24px; height: 24px; border-radius: 50%; }
.red { background: #ed6a5e; } .amber { background: #f5bf4f; } .green { background: #61c554; }
.tabs { display: flex; }
.tabs > * { width: 72px; height: 40px; padding: 4px 9px 4px 0; border-right: 2px solid #444; }
.tabs.narrow > * { width: 70px; }
.tabs > .last { border-color: transparent; }
.tabs b { display: flex; justify-content: center; font: 400 26px/30px "Noto Sans", sans-serif; color: #fff; letter-spacing: 0; background: linear-gradient(#43a63c, #2b7a2f) 15px 4px / 32px 32px no-repeat; }
.tabs b.r { background: linear-gradient(#3f66a0, #3f66a0) 14px 4px / 32px 32px no-repeat; }
.active-tab { width: 73px; height: 68px; align-self: flex-end; background: #353535; border-radius: 16px 16px 0 0; display: flex; align-items: center; justify-content: center; padding-left: 8px; position: relative; }
.active-tab::before, .active-tab::after { content: ""; position: absolute; bottom: 0; width: 14px; height: 14px; background: radial-gradient(circle at 0 0, transparent 13px, #353535 14px); left: -14px; }
.active-tab::after { left: auto; right: -14px; transform: scaleX(-1); }
.plus { margin-left: 33px; }
.more-tabs { margin-left: 130px; }

.toolbar { height: 74px; flex: none; background: #353535; border-bottom: 2px solid #282828; display: flex; align-items: center; padding: 0 0 0 30px; gap: 37px; }
.omnibox { width: 3216px; height: 56px; margin-left: -9px; border-radius: 28px; background: #202124; display: flex; align-items: center; padding: 0 21px 0 27px; }
.url { flex: 1; margin-left: 23px; font: 400 28px/56px Inter, sans-serif; letter-spacing: -.1px; color: #919191; white-space: nowrap; }
.url em { font-style: normal; color: #fff; }
.avatar { margin: 0 0 0 -15px; }

/* AWS navigation */
.awsbar { height: 82px; flex: none; background: #262f3e; border-bottom: 2px solid #545b66; display: flex; align-items: center; color: #fff; font-size: 24px; letter-spacing: -.2px; -webkit-text-stroke: .5px; }
.aws-logo { margin: 2px 0 0 36px; }
.aws-word { font: 600 34px "Open Sans", sans-serif; fill: #fff; letter-spacing: -1px; }
.services { display: flex; align-items: center; gap: 15px; border-left: 2px solid #434b56; height: 44px; margin-left: 33px; padding-left: 33px; width: 207px; letter-spacing: -.4px; }
.search { width: 1080px; height: 60px; border: 2px solid #879596; border-radius: 4px; background: #16191f; color: #95a5a6; display: flex; align-items: center; padding: 0 22px 0 21px; font-size: 28px; -webkit-text-stroke: .2px; }
.search i { margin: 2px auto 0 18px; letter-spacing: -.1px; }
.search span { letter-spacing: -.2px; }
.account { display: flex; margin-left: 996px; }
.account a { height: 44px; display: flex; align-items: center; border-left: 2px solid #434b56; white-space: nowrap; }
.account a svg:not([width]) { width: 16px; height: 13px; margin: -2px 0 0 12px; }
.account .c-bell { width: 66px; border: 0; }
.c-help { width: 100px; padding-left: 33px; }
.c-region { width: 210px; padding-left: 33px; letter-spacing: -.4px; }
.c-user { padding-left: 34px; letter-spacing: .04px; }

.page { flex: 1; min-height: 0; display: flex; background: #f2f3f3; -webkit-text-stroke: .45px; }
.sidebar { width: 502px; flex: none; background: #fff; border-right: 2px solid #c8cccc; color: #545b64; letter-spacing: -.65px; }
.side-title { height: 112px; display: flex; justify-content: space-between; align-items: center; padding: 2px 42px 0 54px; }
.side-title h2 { font-size: 36px; line-height: 44px; color: #16191f; letter-spacing: -1.5px; }
.favorites { height: 76px; background: #fafafa; border: 2px solid #eaeded; border-top-width: 4px; display: flex; align-items: center; justify-content: space-between; padding: 0 27px 0 60px; letter-spacing: -.55px; }
.favorites svg { width: 17px; height: 20px; color: #687078; }
.sidebar nav { padding-top: 17px; }
.sidebar nav a { display: flex; align-items: center; height: 64px; padding-left: 64px; }
.sidebar nav .dash { margin-bottom: 8px; letter-spacing: -.85px; }
.sidebar nav .group { padding-left: 31px; font-weight: 700; }
.sidebar .group > svg { width: 16px; height: 20px; color: #879596; margin-right: 17px; }
.sidebar .group > .dn { width: 20px; height: 16px; margin-left: -1px; margin-right: 14px; }
.sidebar nav .far { margin-top: 30px; }
.sidebar nav .near { margin-top: 10px; }
.sidebar nav .current { color: #dd6b20; font-weight: 700; }
.counts { display: flex; align-items: center; margin: 5px 24px 0 auto; font-weight: 400; font-size: 24px; letter-spacing: -.2px; gap: 6px; }
.counts svg { width: 32px; height: 32px; margin-top: -4px; }
.n0 { margin-right: 11px; } .n1 { color: #1d8102; margin-right: 9px; }
.side-foot { border-top: 2px solid #eaeded; margin: 15px 2px 0 10px; padding: 13px 0 0 54px; letter-spacing: -.25px; }
.side-foot a { display: block; line-height: 60px; }

main { flex: 1; min-width: 0; padding: 46px 80px 0; height: 1688px; overflow: hidden; }
.crumbs { height: 48px; display: flex; align-items: center; color: #687078; letter-spacing: -.08px; }
.crumbs a { color: #2a6fbb; letter-spacing: -.45px; }
.crumbs svg { width: 18px; height: 32px; margin: 0 27px 0 28px; }
.headline { height: 126px; display: flex; gap: 20px; align-items: center; padding-top: 24px; }
h1 { font-weight: 400; font-size: 56px; line-height: 70px; letter-spacing: -.15px; margin-right: auto; }
button { height: 60px; font: 700 28px/40px "Open Sans", sans-serif; letter-spacing: -.15px; color: #545b64; background: #fff; border: 2px solid #545b64; border-radius: 4px; padding: 0; display: flex; align-items: center; justify-content: center; -webkit-text-stroke: 0; }
.b-actions { width: 224px; letter-spacing: -.3px; padding-left: 2px; } .b-view { width: 372px; }
.b-actions svg { width: 21px; height: 17px; margin-left: 22px; }
.primary { width: 316px; background: #dd7631; border-color: #dd7631; color: #fff; }
.card { background: #fff; border-top: 2px solid #eaeded; box-shadow: 0 2px 2px #7c8a90, 2px 1px 2px #b4bcbc, -2px 1px 2px #b4bcbc; height: 580px; }
.card h2 { font-size: 36px; line-height: 44px; letter-spacing: -.8px; display: flex; align-items: center; }
.sidebar h2, .card h2, .group, .current, .tabbar, .row.head { -webkit-text-stroke: 0; }
.card > h2 { height: 119px; background: #fafafa; border-bottom: 2px solid #eaeded; padding-left: 42px; }
.card > h2 svg { width: 21px; height: 17px; margin-right: 17px; }
.columns { display: grid; grid-template-columns: 974px 974px 974px; padding-top: 29px; }
.columns dl { height: 390px; padding-left: 40px; border-left: 2px solid #eaeded; }
.columns dl:first-child { border-color: transparent; padding-left: 38px; }
dt { color: #545b64; letter-spacing: -.4px; margin-bottom: 10px; margin-top: -1px; }
dd { margin-bottom: 41px; letter-spacing: -.6px; }
.arn { letter-spacing: -.15px; }
.dotted { border-bottom: 2px dotted #545b64; line-height: 30px; display: inline-block; letter-spacing: -.05px; }

.tabbar { display: grid; grid-template-columns: 246px 252px 335px 349px 142px; height: 98px; margin-top: 62px; border-bottom: 2px solid #aab7b8; font-weight: 700; color: #545b64; letter-spacing: -.8px; }
.tabbar a { height: 60px; margin-top: 8px; border-right: 2px solid #aab7b8; text-align: center; line-height: 60px; padding-left: 2px; }
.tabbar a.on { border-right: 0; color: #dd6b20; height: 88px; border-bottom: 4px solid #16191f; }
.tags { margin: 40px 2px 0; height: 900px; }
.tags-head { background: #fafafa; height: 228px; padding: 37px 40px 0; }
.tags-head h2 { white-space: pre; letter-spacing: -1px; line-height: 44px; }
.tags-head h2 span { font-weight: 400; color: #687078; letter-spacing: 0; }
.tags-head p { letter-spacing: -.38px; line-height: 36px; margin-top: -3px; white-space: nowrap; }
.tags-head button { width: 256px; margin-top: 24px; padding-left: 2px; }
.row { display: grid; grid-template-columns: 600px 1fr; height: 80px; align-items: center; padding-left: 40px; border-bottom: 2px solid #eaeded; letter-spacing: -.2px; }
.row span { padding-top: 2px; }
.row span:first-child { letter-spacing: -.4px; }
.row .sha { letter-spacing: .07px; }
.row.head { height: 94px; background: #fafafa; border-top: 2px solid #eaeded; font-weight: 700; color: #545b64; padding-left: 42px; letter-spacing: -.5px; }
.row.head span:first-child { height: 46px; width: 560px; border-right: 2px solid #eaeded; }

footer { height: 66px; flex: none; background: #252e3c; border: 2px solid #525c68; border-radius: 0 0 20px 20px; color: #fff; display: flex; align-items: center; font-size: 24px; letter-spacing: -.2px; white-space: nowrap; padding: 2px 38px 0 38px; -webkit-text-stroke: .5px; }
.fb { margin-right: 50px; letter-spacing: -.5px; }
.lang { color: #95a5a6; letter-spacing: -.15px; margin-right: 10px; -webkit-text-stroke: .3px; }
footer svg { margin: 0 auto 0 5px; }
.copy { margin-right: 65px; letter-spacing: -.18px; }
.priv { margin-right: 57px; }
.terms { margin-right: 54px; letter-spacing: -.5px; }
.cookie { padding-top: 3px; letter-spacing: -.45px; }

/* desktop and dock */
.desktop { flex: 1; position: relative; display: flex; justify-content: center; padding-top: 20px; padding-right: 1px; }
.wallpaper { position: absolute; inset: 0; }
.dock { position: relative; width: 3171px; height: 160px; border: 2px solid #55544f; border-radius: 48px; background: linear-gradient(90deg, #31302c, #3d3c37 50%, #2f2e2a 80%, #292824); display: flex; gap: 33.1px; padding: 20px 20px 0; letter-spacing: 0; }
.app { position: relative; width: 105px; height: 105px; flex: none; }
.app > svg { width: 105px; height: 105px; }
.run::after { content: ""; position: absolute; left: 47px; top: 126px; width: 8px; height: 8px; border-radius: 50%; background: #bbb9b4; }
.sep { width: 2px; height: 120px; background: #6c6b66; margin: -2px 13px 0 15px; flex: none; }
.badge { position: absolute; left: 71px; top: -12px; width: 49px; height: 49px; border-radius: 50%; background: #e55243; color: #fff; font: 400 28px/49px Inter, sans-serif; text-align: center; }
.oct { font: 600 21px Inter, sans-serif; fill: #fff; text-anchor: middle; }
.six { font: 300 65px Inter, sans-serif; fill: #222; text-anchor: middle; }
.quote { font: 700 84px "Liberation Serif", serif; fill: #eea238; }
.go { font: 700 38px "Open Sans", sans-serif; fill: #fff; }
```
